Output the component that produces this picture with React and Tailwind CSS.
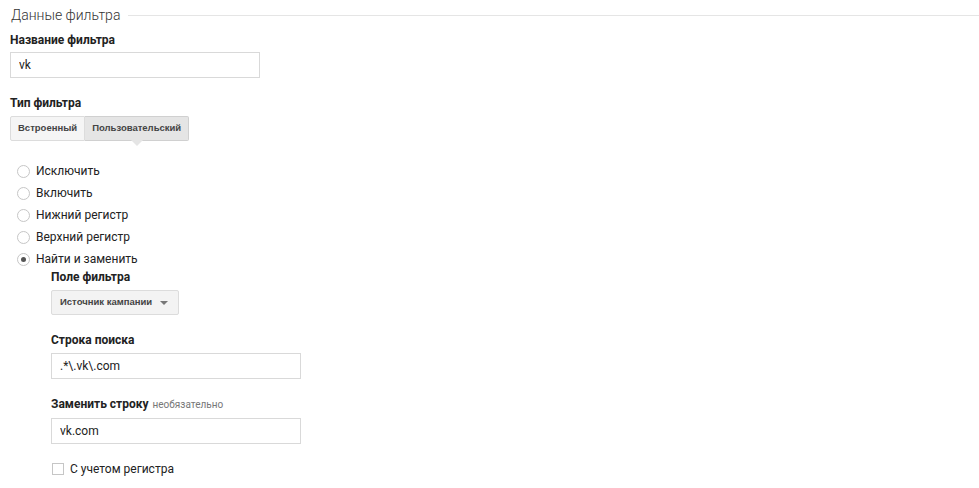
import React, { useState } from 'react';

const Label = ({ children, hint }) => (
    <div className="text-[12px] font-bold text-[#222] leading-[14px]">
        {children}
        {hint && <span className="ml-1 text-[10px] font-normal text-[#777]">{hint}</span>}
    </div>
);

const TextInput = ({ value }) => (
    <input
        type="text"
        defaultValue={value}
        className="block w-[250px] h-[26px] border border-[#d9d9d9] px-2 text-[12px] text-[#222] outline-none"
    />
);

const Radio = ({ checked, label, onClick }) => (
    <label className="flex items-center h-[22px] cursor-pointer" onClick={onClick}>
        <span className="ml-[7px] w-[13px] h-[13px] rounded-full border border-[#c6c6c6] bg-white flex items-center justify-center">
            {checked && <span className="w-[5px] h-[5px] rounded-full bg-[#555]"></span>}
        </span>
        <span className="ml-[6px] text-[12px] text-[#222]">{label}</span>
    </label>
);

export default function App() {
    const [type, setType] = useState('custom');
    const [mode, setMode] = useState(4);
    const options = ['Исключить', 'Включить', 'Нижний регистр', 'Верхний регистр', 'Найти и заменить'];

    return (
        <div className="w-[979px] h-[488px] bg-white overflow-hidden font-['Roboto',sans-serif] pl-[10px]">
            <div className="flex items-center h-[30px]">
                <h2 className="text-[14px] font-light text-[#333] leading-[22px] pl-px">Данные фильтра</h2>
                <div className="flex-1 ml-[8px] h-px bg-[#e5e5e5]"></div>
            </div>

            <div className="mt-[3px]">
                <Label>Название фильтра</Label>
                <div className="mt-[5px]">
                    <TextInput value="vk" />
                </div>
            </div>

            <div className="mt-[18px]">
                <Label>Тип фильтра</Label>
                <div className="mt-[6px] flex font-['Liberation_Sans',sans-serif] text-[9.5px] font-bold text-[#444]">
                    <button
                        onClick={() => setType('builtin')}
                        className={`h-[25px] px-[7px] border border-[#dcdcdc] rounded-l-[2px] ${type === 'builtin' ? 'bg-[#e5e5e5]' : 'bg-[#f5f5f5]'}`}
                    >
                        Встроенный
                    </button>
                    <button
                        onClick={() => setType('custom')}
                        className={`relative h-[25px] px-[7px] border border-l-0 border-[#d0d0d0] rounded-r-[2px] ${type === 'custom' ? 'bg-[#e5e5e5]' : 'bg-[#f5f5f5]'}`}
                    >
                        Пользовательский
                        {type === 'custom' && (
                            <span className="absolute left-1/2 -translate-x-1/2 top-full w-0 h-0 border-l-[6px] border-r-[6px] border-t-[6px] border-l-transparent border-r-transparent border-t-[#e5e5e5]"></span>
                        )}
                    </button>
                </div>
            </div>

            <div className="mt-[19px]">
                {options.map((o, i) => (
                    <Radio key={o} label={o} checked={mode === i} onClick={() => setMode(i)} />
                ))}
            </div>

            <div className="pl-[41px]">
                <Label>Поле фильтра</Label>
                <button className="mt-[6px] h-[25px] w-[128px] flex items-center justify-between pl-[8px] pr-[10px] bg-[#f3f3f3] border border-[#dcdcdc] rounded-[2px] font-['Liberation_Sans',sans-serif] text-[9.5px] font-bold text-[#444] whitespace-nowrap">
                    Источник кампании
                    <span className="w-0 h-0 border-l-[4px] border-r-[4px] border-t-[4px] border-l-transparent border-r-transparent border-t-[#777]"></span>
                </button>

                <div className="mt-[18px]">
                    <Label>Строка поиска</Label>
                    <div className="mt-[6px]">
                        <TextInput value=".*\.vk\.com" />
                    </div>
                </div>

                <div className="mt-[18px]">
                    <Label hint="необязательно">Заменить строку</Label>
                    <div className="mt-[6px]">
                        <TextInput value="vk.com" />
                    </div>
                </div>

                <label className="mt-[18px] flex items-center h-[14px] cursor-pointer">
                    <span className="w-[12px] h-[12px] border border-[#c6c6c6] bg-white ml-px"></span>
                    <span className="ml-[6px] text-[12px] text-[#222]">С учетом регистра</span>
                </label>
            </div>
        </div>
    );
}
